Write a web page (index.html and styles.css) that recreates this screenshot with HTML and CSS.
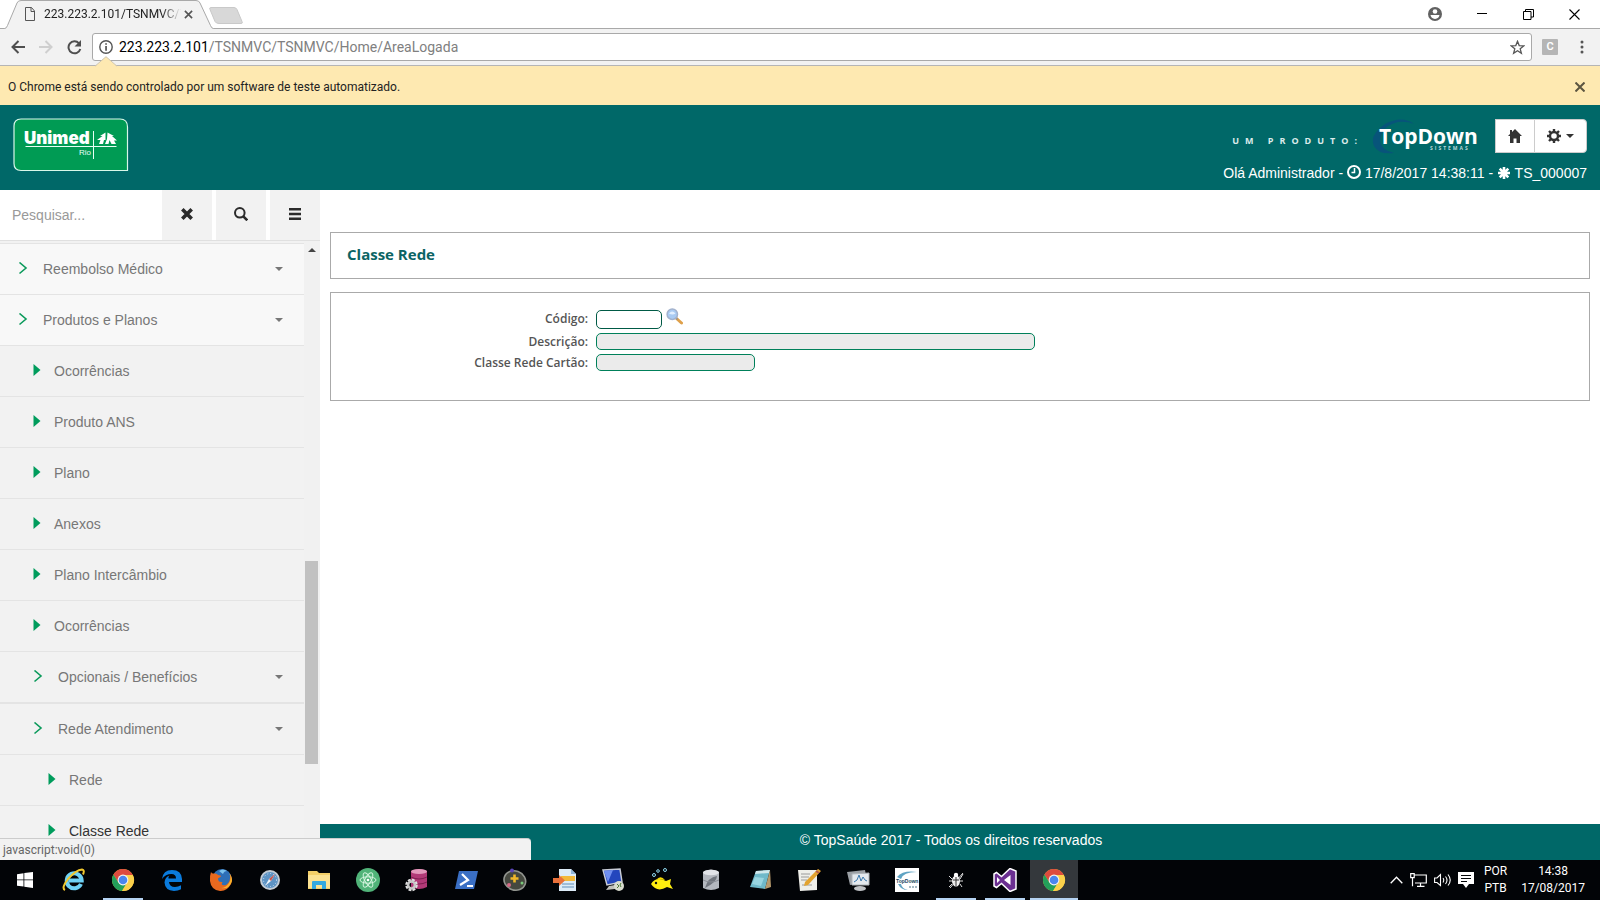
FILE: index.html
```html
<!DOCTYPE html>
<html lang="pt-BR">
<head>
<meta charset="utf-8">
<title>223.223.2.101/TSNMVC/TSNMVC/Home/AreaLogada</title>
<link rel="stylesheet" href="styles.css">
</head>
<body>
<svg class="defs" aria-hidden="true">
  <symbol id="i-chrome" viewBox="0 0 24 24">
    <circle cx="12" cy="12" r="11" fill="#e8b93a"/>
    <path d="M12 1a11 11 0 0 0-9.6 5.6L7.4 14.5 12 7h9.8A11 11 0 0 0 12 1z" fill="#dd4b3e"/>
    <path d="M2.4 6.6A11 11 0 0 0 11 23l5-8.5-8.6.1z" fill="#23a05a"/>
    <path d="M21.8 7H12l4.4 7.5L11 23A11 11 0 0 0 21.8 7z" fill="#fbd14b"/>
    <circle cx="12" cy="12" r="5.4" fill="#f4f4f4"/>
    <circle cx="12" cy="12" r="4.3" fill="#4a86ee"/>
  </symbol>
  <symbol id="i-chevron" viewBox="0 0 10 14"><path d="M1.500 .5 8 6l-6.500 5.500" fill="none" stroke="#0b9a5b" stroke-width="1.600"/></symbol>
  <symbol id="i-tri" viewBox="0 0 8 14"><path d="M.5 0 7.500 6l-7 6z" fill="#009c5c"/></symbol>
  <symbol id="i-caret" viewBox="0 0 8 4"><path d="M0 0h8L4 4z" fill="currentColor"/></symbol>
</svg>

<header class="browser">
  <div class="tabstrip">
    <svg class="tabshape" width="244" height="29" viewBox="0 0 244 29" aria-hidden="true">
      <path d="M0 28.500h4.500q2 0 3-3L17 3q1-2.500 4-2.500h175q3 0 4 2.500l10.500 22.500q1 3 3 3H244V29H0z" fill="#f2f2f2"/>
      <path d="M0 28.500h4.500q2 0 3-3L17 3q1-2.500 4-2.500h175q3 0 4 2.500l10.500 22.500q1 3 3 3H244" fill="none" stroke="#a9a9a9"/>
      <path d="M211 7.500h23q2 0 3 2l5 12q1 2-1 2h-22q-3 0-4-2l-5-12q-1-2 1-2z" fill="#d8d8d8" stroke="#c9c9c9"/>
    </svg>
    <div class="tab">
      <svg width="12" height="14" viewBox="0 0 12 14" fill="none" stroke="#555" aria-hidden="true"><path d="M1.500.5h6l3 3.500v9.500h-9zM7 .5V4.500h3.500"/></svg>
      <span class="tabtitle">223.223.2.101/TSNMVC/T</span>
      <button class="plain" aria-label="Fechar guia"><svg width="9" height="9" viewBox="0 0 10 10" stroke="#555" stroke-width="1.800"><path d="M1 1l8 8M9 1L1 9"/></svg></button>
    </div>
    <div class="winctl">
      <button class="plain" aria-label="Perfil"><svg width="14" height="14" viewBox="0 0 14 14"><circle cx="7" cy="7" r="7" fill="#616161"/><circle cx="7" cy="4.500" r="2.300" fill="#fff"/><path d="M2.500 8h9q-.5 3.500-4.500 4-4-.5-4.500-4z" fill="#fff"/></svg></button>
      <button class="plain" aria-label="Minimizar"><svg width="11" height="11" viewBox="0 0 11 11" stroke="#000"><path d="M0 4.500h10"/></svg></button>
      <button class="plain" aria-label="Restaurar"><svg width="11" height="11" viewBox="0 0 11 11" fill="none" stroke="#000"><path d="M.5 2.500h7.500v8H.5zM2.500 2.500V.5h8v7.500H8"/></svg></button>
      <button class="plain" aria-label="Fechar"><svg width="11" height="11" viewBox="0 0 11 11" stroke="#000" stroke-width="1.100"><path d="M.5.5l10 10M10.500.5l-10 10"/></svg></button>
    </div>
  </div>
  <div class="toolbar">
    <button class="plain" aria-label="Voltar"><svg width="14" height="14" viewBox="0 0 14 14" fill="none" stroke="#4f4f4f" stroke-width="2"><path d="M14 7H2M7.500 1 1.500 7l6 6"/></svg></button>
    <button class="plain" aria-label="Avançar"><svg width="14" height="14" viewBox="0 0 14 14" fill="none" stroke="#cfcfcf" stroke-width="2"><path d="M0 7h12M6.500 1l6 6-6 6"/></svg></button>
    <button class="plain" aria-label="Recarregar"><svg width="15" height="15" viewBox="0 0 15 15" fill="none" stroke="#4f4f4f" stroke-width="2"><path d="M12 3.300A6 6 0 1 0 13.300 9"/><path d="M14 0v6.500H7.500z" fill="#4f4f4f" stroke="none"/></svg></button>
    <div class="omnibox">
      <svg width="14" height="14" viewBox="0 0 14 14" aria-hidden="true"><circle cx="7" cy="7" r="6.200" fill="none" stroke="#555" stroke-width="1.400"/><path d="M6.200 3.200h1.700v1.600H6.200zM6.200 6h1.700v4.800H6.200z" fill="#555"/></svg>
      <div class="url"><b>223.223.2.101</b>/TSNMVC/TSNMVC/Home/AreaLogada</div>
      <button class="plain" aria-label="Favoritar"><svg width="15" height="15" viewBox="0 0 15 15" fill="none" stroke="#555" stroke-width="1.300"><path d="M7.500 1.300l1.700 4.300 4.500.3-3.500 2.900 1.200 4.500-3.900-2.500-3.900 2.500 1.200-4.500L1.300 5.900l4.500-.3z"/></svg></button>
    </div>
    <span class="ext">C</span>
    <button class="plain menu" aria-label="Menu"><svg width="4" height="14" viewBox="0 0 4 14" fill="#555"><circle cx="2" cy="2" r="1.500"/><circle cx="2" cy="7" r="1.500"/><circle cx="2" cy="12" r="1.500"/></svg></button>
  </div>
  <div class="infobar">
    <svg class="notch" width="22" height="11" viewBox="0 0 22 11" aria-hidden="true"><path d="M0 10.500 11 .7l11 9.800V11H0z" fill="#fee9b1"/><path d="M0 10.200 11 .7l11 9.500" fill="none" stroke="#cfc5ae"/></svg>
    <span>O Chrome está sendo controlado por um software de teste automatizado.</span>
    <button class="plain" aria-label="Dispensar"><svg width="10" height="10" viewBox="0 0 10 10" stroke="#5c5540" stroke-width="2"><path d="M.5.5l9 9M9.500.5l-9 9"/></svg></button>
  </div>
</header>

<div class="topbar">
  <a class="unimed" href="#" aria-label="Unimed Rio">
    <svg width="116" height="54" viewBox="0 0 116 54">
      <path d="M8 1h99q7.500 0 7.500 8v43.500H8q-7 0-7-7V8q0-7 7-7z" fill="#009b54" stroke="#d9f7ea" stroke-width="1.200"/>
      <text class="um" x="11" y="26">Unimed</text>
      <text class="rio" x="66" y="37">Rio</text>
      <path d="M12.500 28.500h91M80.500 13v28" stroke="#e8fff4" stroke-width="1" fill="none"/>
      <path d="M92.500 14.500 87 18h2.500L84 22h3.500L86 26h4l1-4h1.500z" fill="#fff"/>
      <path d="M94.500 14.500l6.500 3.500h-2l5 4.500h-3l2 3.500h-4.500l-2-4-1 4h-3.500l2-5z" fill="#fff"/>
    </svg>
  </a>
  <div class="topright">
    <div class="brandrow">
      <span class="produto">UM PRODUTO:</span>
      <svg class="topdown" width="106" height="38" viewBox="0 0 106 38" role="img" aria-label="TopDown Sistemas">
        <path d="M43 7Q31-2 14 7-2 18 3 29q5 9 20 7Q10 33 9 24 10 9 27 5q9-1 16 2z" fill="#07547a"/>
        <text class="td" x="8" y="27">TopDown</text>
        <text class="sis" x="59" y="33">SISTEMAS</text>
      </svg>
      <div class="btns">
        <button aria-label="Início"><svg width="14" height="14" viewBox="0 0 14 14"><path d="M7 0l7 7h-2v7H8.500V9.500h-3V14H2V7H0L2 5V1h2v2z" fill="#333"/></svg></button>
        <button aria-label="Configurações"><svg width="14" height="14" viewBox="0 0 14 14" fill="none" stroke="#333"><circle cx="7" cy="7" r="4" stroke-width="2.400"/><path d="M7 0v3M7 11v3M0 7h3M11 7h3M2 2l2 2M10 10l2 2M12 2l-2 2M4 10l-2 2" stroke-width="2.400"/></svg><svg width="8" height="4"><use href="#i-caret"/></svg></button>
      </div>
    </div>
    <div class="greet">Olá Administrador - <svg width="14" height="14" viewBox="0 0 14 14" fill="none" stroke="#fff" stroke-width="2"><circle cx="7" cy="7" r="6"/><path d="M7.500 3v4.500H4.500" stroke-width="1.500"/></svg> 17/8/2017 14:38:11 - <svg width="14" height="12" viewBox="-1 0 14 12" stroke="#fff" stroke-width="2.600"><path d="M6 0v12M0 6h12M1.700 1.700l8.600 8.600M10.300 1.700l-8.600 8.600"/></svg> TS_000007</div>
  </div>
</div>

<div class="page">
  <aside class="sidebar">
    <form class="search">
      <input type="text" placeholder="Pesquisar..." aria-label="Pesquisar">
      <button type="button" aria-label="Limpar"><svg width="12" height="12" viewBox="0 0 12 12" stroke="#2b2b2b" stroke-width="3.600"><path d="M1.300 1.300l9.400 9.400M10.700 1.300l-9.400 9.400"/></svg></button>
      <button type="button" aria-label="Buscar"><svg width="14" height="14" viewBox="0 0 14 14" fill="none" stroke="#2b2b2b" stroke-width="2"><circle cx="5.800" cy="5.800" r="4.800"/><path d="M9.300 9.300l4 4" stroke-width="2.600"/></svg></button>
      <button type="button" aria-label="Alternar menu"><svg width="12" height="12" viewBox="0 0 12 12" fill="#2b2b2b"><path d="M0 0h12v2.500H0zM0 4.700h12v2.600H0zM0 9.500h12V12H0z"/></svg></button>
    </form>
    <div class="menuwrap">
      <ul class="tree">
        <li class="l1 grp"><a href="#"><svg class="chev"><use href="#i-chevron"/></svg>Reembolso Médico<svg class="car"><use href="#i-caret"/></svg></a></li>
        <li class="l1 grp"><a href="#"><svg class="chev"><use href="#i-chevron"/></svg>Produtos e Planos<svg class="car"><use href="#i-caret"/></svg></a></li>
        <li class="l2"><a href="#"><svg class="tri"><use href="#i-tri"/></svg>Ocorrências</a></li>
        <li class="l2"><a href="#"><svg class="tri"><use href="#i-tri"/></svg>Produto ANS</a></li>
        <li class="l2"><a href="#"><svg class="tri"><use href="#i-tri"/></svg>Plano</a></li>
        <li class="l2"><a href="#"><svg class="tri"><use href="#i-tri"/></svg>Anexos</a></li>
        <li class="l2"><a href="#"><svg class="tri"><use href="#i-tri"/></svg>Plano Intercâmbio</a></li>
        <li class="l2"><a href="#"><svg class="tri"><use href="#i-tri"/></svg>Ocorrências</a></li>
        <li class="l2 grp"><a href="#"><svg class="chev"><use href="#i-chevron"/></svg>Opcionais / Benefícios<svg class="car"><use href="#i-caret"/></svg></a></li>
        <li class="l2 grp thick"><a href="#"><svg class="chev"><use href="#i-chevron"/></svg>Rede Atendimento<svg class="car"><use href="#i-caret"/></svg></a></li>
        <li class="l3"><a href="#"><svg class="tri"><use href="#i-tri"/></svg>Rede</a></li>
        <li class="l3 on"><a href="#"><svg class="tri"><use href="#i-tri"/></svg>Classe Rede</a></li>
      </ul>
      <div class="scroll"><svg width="8" height="4" viewBox="0 0 8 4"><path d="M0 4h8L4 0z" fill="#444"/></svg><div class="thumb"></div></div>
    </div>
  </aside>
  <div class="content">
    <main>
      <section class="box title"><h1>Classe Rede</h1></section>
      <section class="box">
        <form class="fields">
          <label for="cod">Código:</label>
          <div class="cell"><input id="cod" class="code" type="text"><button type="button" class="plain" aria-label="Pesquisar código"><svg width="17" height="17" viewBox="0 0 17 17"><path d="M10 10l5.500 5" stroke="#dfa04a" stroke-width="3" stroke-linecap="round"/><path d="M9.500 9.500l2 2" stroke="#8a9099" stroke-width="1.500"/><circle cx="6.300" cy="6.200" r="5.200" fill="#a9cbf3" stroke="#a3b2cd" stroke-width="1.500"/><path d="M3 5.500q3-4 6.500 0-3 2-6.500 0z" fill="#e2efff"/></svg></button></div>
          <label for="desc">Descrição:</label>
          <div class="cell"><input id="desc" class="desc" type="text" readonly></div>
          <label for="cart">Classe Rede Cartão:</label>
          <div class="cell"><input id="cart" class="cart" type="text" readonly></div>
        </form>
      </section>
    </main>
    <footer>© TopSaúde 2017 - Todos os direitos reservados</footer>
  </div>
  <div class="status">javascript:void(0)</div>
</div>

<nav class="taskbar" aria-label="Barra de tarefas">
  <button class="start" aria-label="Iniciar"><svg width="16" height="16" viewBox="0 0 16 16" fill="#fff"><path d="M0 2.200 6.500 1.200v6.300H0zM7.300 1.100 16 0v7.500H7.300zM0 8.300h6.500v6.300L0 13.700zM7.300 8.300H16V16l-8.700-1.200z"/></svg></button>
  <button aria-label="Internet Explorer"><svg viewBox="0 0 24 24"><path d="M19 16a7.500 7.500 0 1 1 .7-3.500H7" fill="none" stroke="#6fd2f5" stroke-width="4"/><path d="M3 22Q-1 20 6 11 14 2 20 1.500q3 .5 1 5" fill="none" stroke="#f0c72e" stroke-width="2"/></svg></button>
  <button class="run" aria-label="Chrome"><svg><use href="#i-chrome"/></svg></button>
  <button aria-label="Edge"><svg viewBox="0 0 24 24"><path d="M2 11Q3 2 12 2q9.500 0 10 9v3H9q.5 5 6 5 3 0 6-1.700v4Q18 23 14 23q-9-.5-9.500-8.500Q5 9 9.500 7.500 8 9 8.500 10.500H16Q16 6 11.500 6 5.500 6 2 11z" fill="#0a7bdc"/></svg></button>
  <button aria-label="Firefox"><svg viewBox="0 0 24 24"><circle cx="13" cy="10.500" r="9.500" fill="#2d6fb7"/><path d="M10 3q4-3 8 0-3 0-4 3z" fill="#7cc3ee"/><path d="M2 4q1 2 3 1.500Q8 5 9 7q3 0 3 1.500L9 10.500q0 4 4.500 3.500Q11 18 17 17q5-3 4-11 3 5 1 10-4 7.500-11 7Q2 22 1 13 .5 8 2 4z" fill="#e8691f"/><path d="M20 5q3 5 0 10-3 5-8 5 8 2 11-7 0-5-3-8z" fill="#f8b22b"/></svg></button>
  <button aria-label="Safari"><svg viewBox="0 0 24 24"><circle cx="12" cy="12" r="9" fill="#5d93c4" stroke="#c3ccd5" stroke-width="2"/><circle cx="12" cy="12" r="6.500" fill="none" stroke="#d0e4f4" stroke-dasharray="1 2"/><path d="M17 6l-4 7-6 5 4-7z" fill="#eef5fb"/><path d="M17 6l-4 7-2-2z" fill="#c9564d"/></svg></button>
  <button aria-label="Explorador"><svg viewBox="0 0 24 24"><path d="M1 3h9l2 2h11v16H1z" fill="#f3cf68"/><path d="M1 7h22v13H1z" fill="#fbe292"/><path d="M5 21v-7q0-1 1-1h12q1 0 1 1v7h-4v-4H9v4z" fill="#33a9e0"/></svg></button>
  <button aria-label="Atom"><svg viewBox="0 0 24 24"><circle cx="12" cy="12" r="12" fill="#50b378"/><g fill="none" stroke="#d5f5df"><ellipse cx="12" cy="12" rx="8" ry="3.200"/><ellipse cx="12" cy="12" rx="8" ry="3.200" transform="rotate(60 12 12)"/><ellipse cx="12" cy="12" rx="8" ry="3.200" transform="rotate(120 12 12)"/></g><circle cx="12" cy="12" r="1.300" fill="#fff"/></svg></button>
  <button aria-label="Banco de dados"><svg viewBox="0 0 24 24"><path d="M6 3q8-4 16 0v16q-8 4-16 0z" fill="#b23a77"/><ellipse cx="14" cy="3.500" rx="8" ry="2.500" fill="#e39abc"/><path d="M6 9q8 4 16 0M6 14q8 4 16 0" fill="none" stroke="#7e1f50"/><circle cx="6.500" cy="17" r="4.500" fill="none" stroke="#e0e0e0" stroke-width="3.500" stroke-dasharray="2.500 1"/><circle cx="6.500" cy="17" r="3.400" fill="none" stroke="#c8c8c8" stroke-width="2.500"/></svg></button>
  <button aria-label="PowerShell"><svg viewBox="0 0 24 24"><path d="M5 3h19l-4 18H1z" fill="#3a6fc4"/><path d="M8 6l6 6-8 5M13 18h6" fill="none" stroke="#fff" stroke-width="2.200"/></svg></button>
  <button aria-label="Ferramenta"><svg viewBox="0 0 24 24"><ellipse cx="12" cy="12.500" rx="11" ry="9.500" fill="#45483f" stroke="#92958f" stroke-width="1.600" transform="rotate(20 12 12)"/><path d="M11.500 6.500v8M7.500 10.500h8" stroke="#f1b82a" stroke-width="2.600"/><circle cx="6" cy="17" r="2" fill="#d66a86"/><circle cx="19" cy="15" r="1.500" fill="#79c779"/><circle cx="9" cy="2.500" r="2" fill="#5a46b8"/></svg></button>
  <button aria-label="Importar"><svg viewBox="0 0 24 24"><path d="M7 1h12l5 5v17H7z" fill="#dcebf7"/><path d="M19 1v5h5z" fill="#8fb4d6"/><path d="M9 8h14v5H9z" fill="#f2b83a"/><path d="M10 16h12M10 19h12" stroke="#89aed0" stroke-width="1.500"/><path d="M1 10h6V7l6 5.500L7 18v-3H1z" fill="#e8703a"/></svg></button>
  <button aria-label="Área remota"><svg viewBox="0 0 24 24"><path d="M2 2l17-1 2 13-15 3z" fill="#2346bd" stroke="#c8ccd6" stroke-width="1.500"/><path d="M3 3l9-1-5 12z" fill="#6f8ff0"/><path d="M8 18l6-1v4l-9 1z" fill="#c1c1bb"/><circle cx="18" cy="18" r="5" fill="#d9dccf"/><path d="M16 16l2 2-2 2M20 15l-1 2 1 2" fill="none" stroke="#4d7a3a"/></svg></button>
  <button aria-label="Peixe"><svg viewBox="0 0 24 24"><path d="M1 16q5-8 15-3l5-2-1 5 3 5-6-2Q7 25 1 16z" fill="#ffee10"/><path d="M7 11q4-4 8 1z" fill="#f7da00"/><circle cx="6" cy="15" r="1.200" fill="#111"/><g fill="none" stroke="#8fd7ee"><circle cx="4" cy="7" r="1.500"/><circle cx="8" cy="3" r="1.300"/><circle cx="15" cy="2" r="1.500"/></g></svg></button>
  <button aria-label="SQL"><svg viewBox="0 0 24 24"><path d="M4 4q8-5 16 0v16q-8 4-16 0z" fill="#b4b8bf"/><ellipse cx="12" cy="4.500" rx="8" ry="2.800" fill="#e2e4e8"/><path d="M6 20Q9 9 18 8q0 6-12 12z" fill="#70757d"/><path d="M4 12q8 4 16 0" fill="none" stroke="#8a8e96"/></svg></button>
  <button aria-label="Bloco de notas"><svg viewBox="0 0 24 24"><path d="M8 3l14-1-5 19-15-2z" fill="#6fb9c9"/><path d="M8 3l14-1-1 3-14 1z" fill="#cfe8ec"/><path d="M22 2l1 17-6 2z" fill="#b79a6c"/><path d="M7 9l9 1-3 8-9-2z" fill="#98d5e0"/></svg></button>
  <button aria-label="Editor"><svg viewBox="0 0 24 24"><path d="M1 2h19v20l-17 1z" fill="#eeeee9"/><path d="M4 6h9M4 9h8M4 12h6M5 17h10" stroke="#9a9a9a"/><path d="M21 1l3 2L11 17l-4 1 1-4z" fill="#e3a32f"/><path d="M19 3l3 2" stroke="#b55b4a" stroke-width="2"/></svg></button>
  <button aria-label="Monitor"><svg viewBox="0 0 24 24"><path d="M1 4l18-2 2 11-17 4z" fill="#9ba0a5"/><path d="M6 6l17-1v12H6z" fill="#e4e9ee" stroke="#b0b5ba"/><path d="M8 14l3-2 2-5 2 6 2-4 2 3 2 1" fill="none" stroke="#3a78ad"/><ellipse cx="14" cy="20.500" rx="6" ry="2.500" fill="#bfc2c5"/></svg></button>
  <button aria-label="TopDown"><svg viewBox="0 0 24 24"><path d="M0 0h24v24H0z" fill="#fff"/><path d="M2 9Q8 2 22 4 8 4 6 11zM3 16q3 6 10 6-6-1-7-6z" fill="#5fa3c3"/><text class="tdmini" x="1" y="15">TopDown</text><path d="M14 19h8" stroke="#4a7488" stroke-dasharray="2 1"/></svg></button>
  <button class="run" aria-label="Depurador"><svg viewBox="0 0 24 24"><ellipse cx="12" cy="13" rx="4" ry="5.500" fill="#f2f2f2"/><circle cx="12" cy="7" r="2.200" fill="#fff"/><path d="M8 11L5 8M16 11l3-5M8 13H5M16 13h3M8 16l-3 3M16 16l2 3M6 20L19 5" stroke="#ddd"/><path d="M12 9v9M9 12h6" stroke="#333"/></svg></button>
  <button class="run" aria-label="Visual Studio"><svg viewBox="0 0 24 24"><path d="M17 .5l6 2.500v18l-6 2.500-8.500-8L3.500 19.500 1 18V6l2.500-1.500 5 4z" fill="#6b2f91" stroke="#fff" stroke-width="1.500"/><path d="M17.500 7v10L11 12zM4 9v6l3-3z" fill="#fff"/></svg></button>
  <button class="run active" aria-label="Chrome"><svg><use href="#i-chrome"/></svg></button>
  <div class="tray">
    <svg width="13" height="8" viewBox="0 0 13 8" fill="none" stroke="#fff" stroke-width="1.300"><path d="M.7 7.200 6.500 1.200l5.800 6"/></svg>
    <svg width="17" height="14" viewBox="0 0 17 14" fill="none" stroke="#fff" stroke-width="1.200"><path d="M4 2h12.300v8H5M10.500 10v3M7 13.300h7.500M.7.700h3.500v4H.7zM2.500 4.700v8.500"/></svg>
    <svg width="17" height="14" viewBox="0 0 17 14" fill="none" stroke="#fff" stroke-width="1.100"><path d="M.6 5h2.400L6.500 1.500v11L3 9.500H.6zM9 5q1.500 2 0 4.500M11.500 3.500q3 3.500 0 7.500M14 1.500q4.500 5.500 0 11"/></svg>
    <svg width="16" height="16" viewBox="0 0 16 16"><path d="M0 0h16v12h-5l-3 4-3-4H0z" fill="#fff"/><path d="M3 3.500h10M3 6.500h10M3 9.500h6" stroke="#050709" stroke-width="1.200"/></svg>
    <div class="lang">POR<br>PTB</div>
    <div class="clock">14:38<br>17/08/2017</div>
  </div>
</nav>
</body>
</html>
```

FILE: styles.css
```css
* { box-sizing: border-box; }
body {
  margin: 0;
  height: 100vh;
  display: flex;
  flex-direction: column;
  overflow: hidden;
  background: #fff;
  color: #777;
  font: 14px/20px "Liberation Sans", Arial, sans-serif;
}
svg { flex: none; display: block; }
a { color: inherit; text-decoration: none; }
button, input { font: inherit; }
.defs { position: absolute; width: 0; height: 0; }
.plain {
  display: flex;
  align-items: center;
  padding: 0;
  border: 0;
  background: none;
}

/* Browser frame */
.browser { flex: none; font-family: Roboto, "Open Sans", sans-serif; }
.tabstrip {
  position: relative;
  display: flex;
  justify-content: space-between;
  height: 29px;
  border-bottom: 1px solid #a9a9a9;
}
.tabshape { position: absolute; left: 0; top: 0; }
.tab {
  position: relative;
  display: flex;
  align-items: center;
  padding-left: 24px;
}
.tabtitle {
  width: 140px;
  margin-left: 8px;
  white-space: nowrap;
  color: #222;
  font-size: 12px;
  -webkit-mask-image: linear-gradient(90deg, #000 84%, transparent 98%);
  mask-image: linear-gradient(90deg, #000 84%, transparent 98%);
}
.winctl { display: flex; align-items: center; gap: 35px; padding-right: 20px; }
.toolbar {
  display: flex;
  align-items: center;
  gap: 14px;
  height: 37px;
  padding: 0 16px 0 11px;
  border-bottom: 1px solid #b5b5b5;
  background: #f2f2f2;
}
.omnibox {
  flex: 1;
  display: flex;
  align-items: center;
  gap: 6px;
  height: 28px;
  margin: 0 -4px 0 -4px;
  padding: 0 6px;
  border: 1px solid #a9a9a9;
  border-radius: 3px;
  background: #fff;
}
.url { flex: 1; font-size: 14px; color: #808080; }
.url b { font-weight: 400; color: #000; }
.ext {
  width: 16px;
  height: 16px;
  border-radius: 1px;
  background: #b5b5b5;
  color: #fff;
  font-size: 11px;
  font-weight: 600;
  line-height: 16px;
  text-align: center;
}
.menu { margin-left: 8px; }
.infobar {
  position: relative;
  display: flex;
  align-items: center;
  justify-content: space-between;
  height: 39px;
  padding: 2px 15px 0 8px;
  background: #fee9b1;
  color: #222;
  font-size: 12px;
}
.notch { position: absolute; left: 95px; top: -10px; }

/* Application header */
.topbar {
  flex: none;
  display: flex;
  justify-content: space-between;
  height: 85px;
  padding: 12px 13px 0;
  background: #006868;
  color: #fff;
}
.unimed { padding-top: 1px; }
.um { font: 900 17px Inter, "Open Sans", sans-serif; fill: #fff; }
.rio { font: 8px "Liberation Sans", sans-serif; fill: #e8fff4; }
.topright { display: flex; flex-direction: column; align-items: flex-end; gap: 8px; }
.brandrow { display: flex; align-items: center; height: 38px; }
.produto {
  padding: 9px 8px 0 0;
  font: 700 9px/10px "Open Sans", sans-serif;
  letter-spacing: 6px;
  color: #dcebeb;
}
.td { font: 700 21px "Open Sans", sans-serif; fill: #fff; }
.sis { font: 700 5px "Open Sans", sans-serif; letter-spacing: 2px; fill: #b9d7d9; }
.btns { display: flex; margin-left: 18px; }
.btns button {
  display: flex;
  align-items: center;
  gap: 5px;
  height: 34px;
  padding: 0 12px;
  border: 1px solid #ccc;
  background: #fff;
  color: #333;
}
.btns button + button { margin-left: -1px; border-radius: 0 4px 4px 0; }
.greet { white-space: pre; }
.greet svg { display: inline-block; vertical-align: -1px; }

/* Sidebar */
.page { position: relative; flex: 1; display: flex; min-height: 0; }
.sidebar {
  flex: none;
  display: flex;
  flex-direction: column;
  width: 320px;
  background: #f2f2f2;
}
.search {
  display: flex;
  gap: 4px;
  height: 51px;
  border-bottom: 1px solid #e0e0e0;
  background: #fff;
}
.search input {
  flex: 1;
  min-width: 0;
  margin-right: -4px;
  padding: 0 12px;
  border: 0;
  color: #777;
}
.search input::placeholder { color: #999; }
.search button {
  display: grid;
  place-content: center;
  width: 50px;
  padding: 0 0 2px;
  border: 0;
  background: #f2f2f2;
}
.menuwrap { flex: 1; display: flex; min-height: 0; }
.tree {
  flex: 1;
  margin: 0;
  padding: 2px 0 0;
  overflow: hidden;
  list-style: none;
}
.tree li { border-top: 1px solid #e4e4e4; }
.tree .thick { border-top-width: 2px; }
.tree a { display: flex; align-items: center; height: 50px; padding-right: 21px; }
.l1 { background: #f8f8f8; }
.l1 a { padding-left: 18px; }
.l2 a { padding-left: 33px; }
.l3 a { padding-left: 48px; }
.on { color: #333; }
.chev { width: 10px; height: 14px; margin-right: 15px; }
.tri { width: 8px; height: 14px; margin-right: 13px; }
.car { width: 8px; height: 4px; margin-left: auto; }
.scroll {
  display: flex;
  flex-direction: column;
  align-items: center;
  width: 16px;
  padding: 7px 1px 0 0;
  background: #f1f1f1;
}
.thumb { width: 13px; height: 203px; margin-top: 309px; background: #c1c1c1; }

/* Main area */
.content { flex: 1; display: flex; flex-direction: column; min-width: 0; }
main {
  flex: 1;
  padding: 42px 10px 0;
  font-family: "Open Sans", "Noto Sans", sans-serif;
}
.box { border: 1px solid #aaa; }
.title { margin-bottom: 13px; padding: 11px 16px 14px; }
h1 { margin: 0; font-size: 15px; line-height: 20px; font-weight: 700; color: #0b6464; }
.fields {
  display: grid;
  grid-template-columns: 257px 1fr;
  align-items: center;
  gap: 4px 8px;
  padding: 15px 0 29px;
}
.fields label {
  color: #555;
  font-size: 12px;
  font-weight: 600;
  line-height: 17px;
  text-align: right;
}
.cell { display: flex; gap: 4px; }
.cell input {
  height: 17px;
  border: 1px solid #00805a;
  border-radius: 5px;
  background: #ebebeb;
}
.cell .code { width: 66px; height: 19px; margin-top: 2px; border-color: #005a45; background: #fff; }
.cell .desc { width: 439px; }
.cell .cart { width: 159px; }
.cell .plain { height: 17px; }
footer {
  flex: none;
  height: 36px;
  padding-right: 18px;
  background: #006868;
  color: #fff;
  line-height: 33px;
  text-align: center;
}
.status {
  position: absolute;
  left: 0;
  bottom: 0;
  width: 531px;
  height: 22px;
  padding-left: 3px;
  border-top: 1px solid #ccc;
  border-radius: 0 4px 0 0;
  background: #f2f2f2;
  color: #666;
  font: 12px/22px Roboto, "Open Sans", sans-serif;
}

/* Taskbar */
.taskbar {
  flex: none;
  display: flex;
  gap: 1px;
  height: 40px;
  background: #020407;
}
.taskbar button {
  display: grid;
  place-content: center;
  width: 48px;
  padding: 0;
  border: 0;
  background: none;
}
.taskbar button > svg { width: 24px; height: 24px; }
.taskbar .start { width: 49px; }
.taskbar .start > svg { width: 16px; height: 16px; }
.taskbar .run { background: linear-gradient(#b5d3f2, #b5d3f2) center bottom / 40px 2px no-repeat; }
.taskbar .active { background-color: #34383c; background-size: 48px 2px; }
.tdmini { font: 700 5px "Liberation Sans", sans-serif; fill: #17465e; }
.tray {
  flex: 1;
  display: flex;
  align-items: center;
  justify-content: flex-end;
  gap: 7px;
  padding-right: 15px;
  color: #fff;
  font: 12px/17px Roboto, "Open Sans", sans-serif;
  text-align: center;
}
.lang { margin-left: 3px; }
.clock { margin-left: 7px; }
```
